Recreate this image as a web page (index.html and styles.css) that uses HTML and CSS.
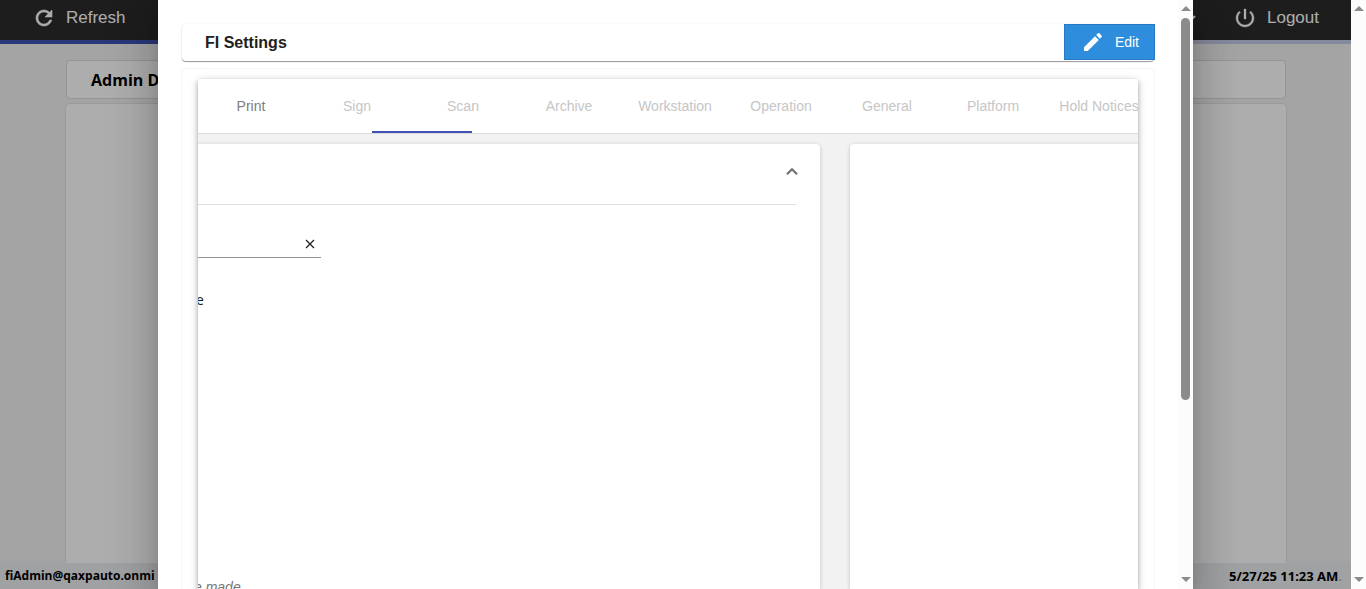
FILE: index.html
```html
<!DOCTYPE html>
<html lang="en">
<head>
    <meta charset="UTF-8">
    <meta name="viewport" content="width=device-width, initial-scale=1">
    <title>FI Settings</title>
    <link rel="stylesheet" href="styles.css">
</head>
<body>
    <div class="page">
        <header class="toolbar">
            <button class="toolbar-btn">
                <svg width="24" height="24" viewBox="0 0 24 24"><path fill="currentColor" stroke="currentColor" stroke-width=".6" d="M17.65 6.35C16.2 4.9 14.21 4 12 4c-4.42 0-7.99 3.58-7.99 8s3.57 8 7.99 8c3.73 0 6.84-2.55 7.73-6h-2.08c-.82 2.33-3.04 4-5.65 4-3.31 0-6-2.69-6-6s2.69-6 6-6c1.66 0 3.14.69 4.22 1.78L13 11h7V4l-2.35 2.35z"/></svg>
                Refresh
            </button>
            <div class="toolbar-right">
                <button class="toolbar-btn" aria-label="Menu">
                    <svg width="12" height="24" viewBox="0 0 12 24"><path d="M2 10l4 4 4-4" fill="none" stroke="currentColor" stroke-width="2"/></svg>
                </button>
                <button class="toolbar-btn">
                    <svg width="24" height="24" viewBox="0 0 24 24"><path fill="currentColor" stroke="currentColor" stroke-width=".3" d="M13 3h-2v10h2V3zm4.83 2.17l-1.42 1.42C17.99 7.86 19 9.81 19 12c0 3.87-3.13 7-7 7s-7-3.13-7-7c0-2.19 1.01-4.14 2.58-5.42L6.17 5.17C4.23 6.82 3 9.26 3 12c0 4.97 4.03 9 9 9s9-4.03 9-9c0-2.74-1.23-5.18-3.17-6.83z"/></svg>
                    Logout
                </button>
            </div>
        </header>
        <div class="progress"><div class="progress-bar"></div></div>

        <main class="dashboard">
            <h1 class="dashboard-title">Admin D</h1>
            <div class="dashboard-body"></div>
        </main>

        <footer class="status-bar">
            <span class="status-user">fiAdmin@qaxpauto.onmi</span>
            <span>5/27/25 11:23 AM<span class="status-dot">.</span></span>
        </footer>

        <!-- Settings dialog -->
        <div class="backdrop">
            <section class="dialog" role="dialog" aria-labelledby="dialog-title">
                <div class="dialog-content">
                    <div class="title-card">
                        <h2 id="dialog-title">FI Settings</h2>
                        <button class="edit-btn">
                            <svg width="24" height="24" viewBox="0 0 24 24"><path fill="currentColor" d="M3 17.25V21h3.75L17.81 9.94l-3.75-3.75L3 17.25zM20.71 7.04c.39-.39.39-1.02 0-1.41l-2.34-2.34c-.39-.39-1.02-.39-1.41 0l-1.83 1.83 3.75 3.75 1.83-1.83z"/></svg>
                            Edit
                        </button>
                    </div>

                    <div class="settings-card">
                        <div class="settings">
                            <nav class="tabs">
                                <button class="tab tab-enabled">Print</button>
                                <button class="tab">Sign</button>
                                <button class="tab">Scan</button>
                                <button class="tab">Archive</button>
                                <button class="tab">Workstation</button>
                                <button class="tab">Operation</button>
                                <button class="tab">General</button>
                                <button class="tab">Platform</button>
                                <button class="tab">Hold Notices</button>
                                <div class="tab-ink"></div>
                            </nav>
                            <div class="panels">
                                <div class="panel panel-main">
                                    <div class="panel-header">
                                        <button class="icon-btn" aria-label="Collapse">
                                            <svg width="20" height="20" viewBox="0 0 24 24"><path d="M6 16l6-6 6 6" fill="none" stroke="#6f6f6f" stroke-width="2.5"/></svg>
                                        </button>
                                    </div>
                                    <div class="field">
                                        <input type="text" aria-label="Value">
                                        <button class="icon-btn" aria-label="Clear">
                                            <svg width="10" height="10" viewBox="0 0 10 10"><path d="M1 1l8 8M9 1L1 9" stroke="#222" stroke-width="1.3"/></svg>
                                        </button>
                                    </div>
                                    <p class="option">e</p>
                                    <p class="note">e made</p>
                                </div>
                                <div class="panel panel-side"></div>
                            </div>
                        </div>
                    </div>
                </div>
                <div class="scrollbar">
                    <span class="arrow-up"></span>
                    <div class="track"><div class="thumb"></div></div>
                    <span class="arrow-down"></span>
                </div>
            </section>
        </div>
    </div>

    <div class="scrollbar">
        <span class="arrow-up"></span>
        <div class="track"></div>
        <span class="arrow-down"></span>
    </div>
</body>
</html>
```

FILE: styles.css
```css
* {
    box-sizing: border-box;
    margin: 0;
    padding: 0;
}

body {
    display: flex;
    height: 100vh;
    overflow: hidden;
    font-family: "Liberation Sans", Arial, sans-serif;
    font-size: 14px;
    color: #212121;
}

button {
    font-family: inherit;
    border: none;
    background: none;
    cursor: pointer;
}

svg {
    display: block;
}

/* Page behind the dialog */
.page {
    position: relative;
    flex: 1;
    min-width: 0;
    display: flex;
    flex-direction: column;
    overflow: hidden;
    background-color: #f2f2f2;
}

.toolbar {
    display: flex;
    justify-content: space-between;
    height: 40px;
    padding: 0 32px;
    background-color: #2c2c2c;
}

.toolbar-right {
    display: flex;
    gap: 36px;
}

.toolbar-btn {
    display: flex;
    align-items: center;
    gap: 10px;
    height: 36px;
    font-size: 17px;
    color: #fff;
}

.progress {
    height: 4px;
    background-color: #c5cae9;
}

.progress-bar {
    width: 50%;
    height: 100%;
    background-color: #3f51b5;
}

.dashboard {
    flex: 1;
    display: flex;
    flex-direction: column;
    gap: 5px;
    padding: 16px 65px 0 66px;
}

.dashboard-title {
    height: 39px;
    padding-left: 24px;
    font-family: "Open Sans", "Noto Sans", sans-serif;
    font-size: 16px;
    font-weight: 700;
    line-height: 38px;
    color: #000;
    background-color: #fff;
    border: 1px solid #dcdcdc;
    border-radius: 4px;
}

.dashboard-body {
    flex: 1;
    background-color: #fff;
    border-radius: 4px 4px 0 0;
    box-shadow: 0 0 2px rgba(0, 0, 0, 0.2);
}

.status-bar {
    position: relative;
    display: flex;
    justify-content: space-between;
    height: 26px;
    padding: 0 9px 0 5px;
    font-family: "Noto Sans", "Open Sans", sans-serif;
    font-size: 13px;
    font-weight: 700;
    line-height: 26px;
    color: #000;
    background-color: #ebeef0;
}

.status-user {
    font-family: "Open Sans", "Noto Sans", sans-serif;
    font-size: 12px;
}

.status-dot {
    color: #bbb;
}

/* Dialog */
.backdrop {
    position: absolute;
    inset: 0;
    display: flex;
    padding: 0 158px;
    background-color: rgba(0, 0, 0, 0.32);
}

.dialog {
    flex: 1;
    min-width: 0;
    display: flex;
    background-color: #fff;
    box-shadow: 0 11px 15px -7px rgba(0, 0, 0, 0.2),
                0 24px 38px 3px rgba(0, 0, 0, 0.14),
                0 9px 46px 8px rgba(0, 0, 0, 0.12);
}

.dialog-content {
    flex: 1;
    min-width: 0;
    display: flex;
    flex-direction: column;
    gap: 8px;
    padding: 24px 24px 0;
    overflow: hidden;
}

.title-card {
    display: flex;
    justify-content: space-between;
    height: 37px;
    padding-left: 23px;
    border-radius: 4px;
    box-shadow: 0 1px 1px rgba(0, 0, 0, 0.4), 0 0 2px rgba(0, 0, 0, 0.08);
}

.title-card h2 {
    font-size: 16px;
    line-height: 37px;
}

.edit-btn {
    display: flex;
    align-items: center;
    gap: 10px;
    height: 36px;
    margin-right: -1px;
    padding: 0 15px 0 16px;
    font-size: 14px;
    color: #fff;
    background-color: #2f8ddd;
    border: 1px solid #2879c4;
}

.settings-card {
    flex: 1;
    display: flex;
    min-height: 0;
    padding: 10px 16px 0;
    border-radius: 4px 4px 0 0;
    box-shadow: 0 0 2px rgba(0, 0, 0, 0.14);
}

.settings {
    flex: 1;
    min-width: 0;
    display: flex;
    flex-direction: column;
    background-color: #f2f2f2;
    box-shadow: 0 2px 5px rgba(0, 0, 0, 0.3), 0 2px 10px rgba(0, 0, 0, 0.12);
}

.tabs {
    position: relative;
    display: flex;
    flex: none;
    height: 55px;
    overflow: hidden;
    background-color: #fff;
    border-bottom: 1px solid #dcdcdc;
}

.tab {
    flex: 0 0 106px;
    font-size: 14px;
    white-space: nowrap;
    color: #c6c6c6;
}

.tab-enabled {
    color: #7d7d7d;
}

.tab-ink {
    position: absolute;
    left: 174px;
    bottom: 0;
    width: 100px;
    height: 2px;
    background-color: #3f51b5;
}

/* Tab content, scrolled sideways */
.panels {
    flex: 1;
    min-height: 0;
    display: flex;
    gap: 30px;
    padding-top: 10px;
    overflow: hidden;
}

.panel {
    background-color: #fff;
    border-radius: 4px 4px 0 0;
    box-shadow: 0 1px 4px rgba(0, 0, 0, 0.2);
}

.panel-main {
    flex: none;
    width: 648px;
    margin-left: -26px;
    padding: 0 24px;
}

.panel-side {
    flex: 1;
    margin-right: -24px;
}

.panel-header {
    display: flex;
    justify-content: flex-end;
    height: 61px;
    padding: 17px 0;
    border-bottom: 1px solid #e0e0e0;
}

.icon-btn {
    display: flex;
    align-items: center;
}

.panel-header .icon-btn {
    height: 20px;
    margin-right: -6px;
}

.field {
    display: flex;
    align-items: center;
    width: 125px;
    height: 27px;
    margin-top: 26px;
    padding-right: 6px;
    border-bottom: 1px solid #949494;
}

.field input {
    flex: 1;
    min-width: 0;
    border: none;
    outline: none;
    background: none;
}

.option {
    margin-top: 32px;
    font-family: "Open Sans", "Noto Sans", sans-serif;
    line-height: 20px;
}

.note {
    margin-top: 268px;
    margin-left: -2px;
    font-style: italic;
    line-height: 18px;
    color: #757575;
}

/* Scrollbars */
.scrollbar {
    flex: none;
    display: flex;
    flex-direction: column;
    align-items: center;
    justify-content: space-between;
    width: 15px;
    padding: 6px 0 7px;
    background-color: #fcfcfc;
}

.arrow-up,
.arrow-down {
    border: 5px solid transparent;
}

.arrow-up {
    border-top: none;
    border-bottom-color: #8b8b8b;
}

.arrow-down {
    border-bottom: none;
    border-top-color: #8b8b8b;
}

.track {
    flex: 1;
    width: 9px;
    padding: 7px 0 5px;
}

.thumb {
    height: 69%;
    border-radius: 5px;
    background-color: #8b8b8b;
}
```
